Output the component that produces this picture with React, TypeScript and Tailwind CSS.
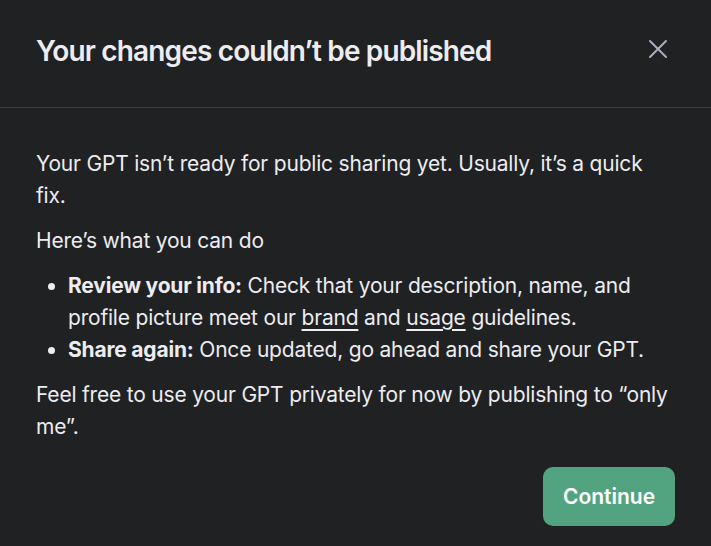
import React from "react";

export default function App() {
  return (
    <div
      className="w-[711px] h-[546px] bg-[#202123] text-[#ececf1] overflow-hidden flex flex-col"
      style={{ fontFamily: "Inter, 'Noto Sans', sans-serif" }}
    >
      <div className="h-[108px] shrink-0 flex items-center justify-between px-9 border-b border-[#3a3b40]">
        <h1 className="text-[28px] font-semibold tracking-[-0.85px] text-[#ececf1] -mt-[6px]">
          Your changes couldn’t be published
        </h1>
        <button className="text-[#acacbe] -mt-[10px] mr-[7px]" aria-label="Close">
          <svg width="20" height="20" viewBox="0 0 20 20" fill="none" stroke="currentColor" strokeWidth="2" strokeLinecap="round">
            <path d="M2 2 L18 18 M18 2 L2 18" />
          </svg>
        </button>
      </div>
      <div className="flex-1 px-9 pt-[40px] text-[21px] leading-[32px] tracking-[-0.2px] text-[#ececf1]">
        <p>Your GPT isn’t ready for public sharing yet. Usually, it’s a quick fix.</p>
        <p className="mt-[13px]">Here’s what you can do</p>
        <ul className="mt-[13px] list-disc pl-8">
          <li>
            <b className="font-bold">Review your info:</b> Check that your description, name, and profile picture meet our{" "}
            <span className="underline underline-offset-4">brand</span> and{" "}
            <span className="underline underline-offset-4">usage</span> guidelines.
          </li>
          <li>
            <b className="font-bold">Share again:</b> Once updated, go ahead and share your GPT.
          </li>
        </ul>
        <p className="mt-[13px]">Feel free to use your GPT privately for now by publishing to “only me”.</p>
        <div className="flex justify-end mt-[24px]">
          <button className="w-[132px] h-[59px] rounded-[10px] bg-[#52a481] text-white text-[21px] font-semibold tracking-normal">
            Continue
          </button>
        </div>
      </div>
    </div>
  );
}
